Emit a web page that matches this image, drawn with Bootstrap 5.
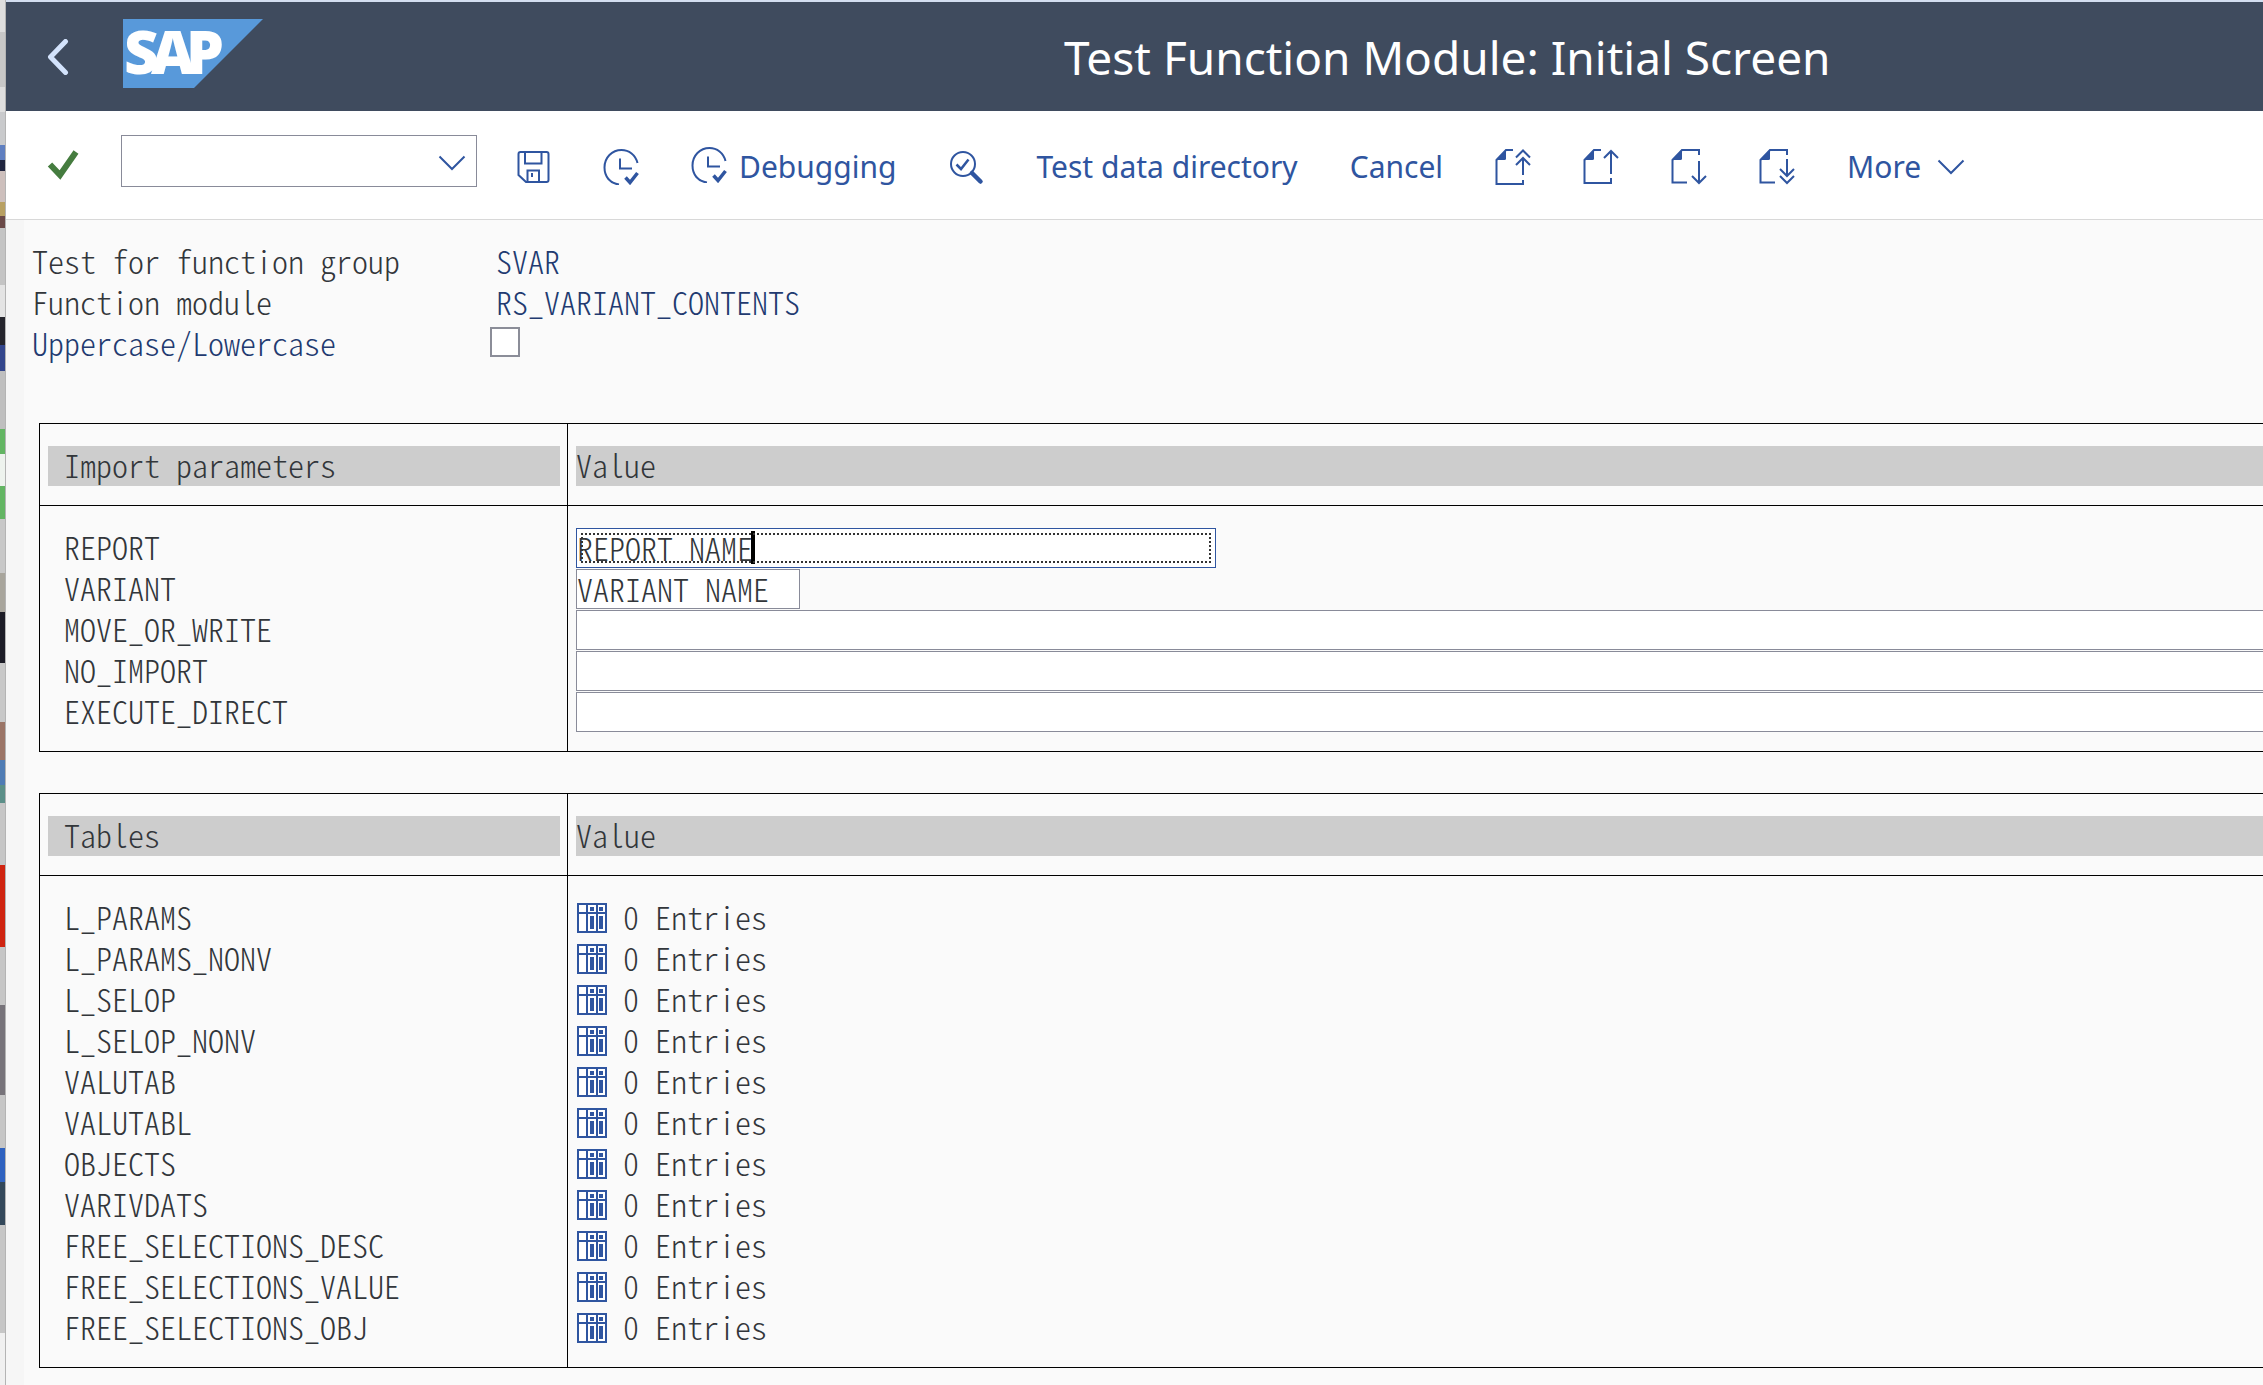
<!DOCTYPE html>
<html lang="en">
<head>
<meta charset="utf-8">
<meta name="viewport" content="width=device-width, initial-scale=1">
<title>Test Function Module: Initial Screen</title>
<link rel="stylesheet" href="https://cdn.jsdelivr.net/npm/bootstrap@5.3.0/dist/css/bootstrap.min.css">
<style>
:root{--ink:#32363a;--blue:#2f55a0;--navy:#223a70}
body{background:#fafafa;font-family:"Noto Sans","Open Sans",sans-serif;overflow:hidden}
.desktop-edge{width:6px;border-right:1px solid #b4b4b4;background:linear-gradient(#dedede 0 32px,#c8c8c8 32px 87px,#dedede 87px 112px,#c9cacc 112px 145px,#5f7fc0 145px 160px,#20253f 160px 171px,#cdbfbc 171px 202px,#b8a062 202px 216px,#6b4a48 216px 228px,#c4c4c4 228px 285px,#e4e4e4 285px 317px,#25252d 317px 345px,#33468c 345px 371px,#bfbfbf 371px 429px,#63b563 429px 418px,#63b563 418px 418px,#63b563 418px 418px,#63b563 418px 454px,#eef3ee 454px 486px,#63b563 486px 519px,#c8c8c8 519px 573px,#a8a59c 573px 612px,#1c1c26 612px 663px,#c8c8c8 663px 722px,#9b7567 722px 760px,#4f7cb4 760px 785px,#5b8f88 785px 803px,#c6c6c6 803px 865px,#cf2410 865px 947px,#c6c6c6 947px 1005px,#77737a 1005px 1095px,#c6c6c6 1095px 1148px,#2f62c0 1148px 1182px,#33485a 1182px 1225px,#c6c6c6 1225px 1333px,#f0f0f0 1333px)}
.title-bar{height:111px;background:#3f4b5e;border-top:2px solid #d3def0}
.back-btn{width:64px;margin-left:20px}
.brand-mark{margin-left:33px;margin-bottom:6px}
.screen-title{font-size:46px;line-height:60px;font-weight:400;color:#fff;margin-left:801px}
.tool-bar{height:109px;border-bottom:1px solid #d8d8d8;gap:52px;padding-left:24px}
.tool-bar .btn{--bs-btn-color:var(--blue);font-size:30px;line-height:40px;border:0;padding:0}
.tool-bar .txt-btn{padding-top:3px}
.cmd-group{margin-right:-14px;padding-bottom:8px}
.cmd-box{width:356px;height:52px;margin-left:42px}
.cmd-box select{width:100%;height:100%;border:1px solid #898b99;background:#fff;appearance:none;border-radius:0}
.cmd-box svg{position:absolute;right:11px;top:20px;pointer-events:none}
.work-area{border-left:18px solid #f6f6f6;padding:22px 0 17px 8px;font:300 32px/36px "Noto Sans CJK SC",monospace;font-feature-settings:"hwid";color:var(--ink)}
.info-grid{display:grid;grid-template-columns:464px 1fr;grid-auto-rows:41px;color:var(--navy);margin-bottom:58px}
.info-grid .ink{color:var(--ink)}
.case-box{appearance:none;width:30px;height:30px;border:2px solid #8b8d98;background:#fff;margin:3px 0 0 -6px}
.param-table{width:calc(100% - 7px);margin:0 0 41px 7px;border-collapse:separate;border-spacing:0;border:solid #000;border-width:1px 0 1px 1px;table-layout:fixed}
.param-table th{font-weight:300;padding:22px 0 19px 8px;border-bottom:1px solid #000}
.param-table th:first-child,.param-table td:first-child{width:528px;border-right:1px solid #000}
.param-table th:first-child{padding-right:7px}
.param-table th div{background:#cdcdcd;height:40px}
.param-table th:first-child div{padding-left:16px}
.param-table td{height:41px;padding:1px 0 0 8px;vertical-align:top}
.param-table td:first-child{padding-left:24px}
.param-table tbody tr:first-child td{height:62px;padding-top:22px}
.param-table tbody tr:last-child td{height:60px}
.param-table label{display:block}
.field{display:block;width:100%;height:40px;border:1px solid #898b99;border-right-width:0;background:#fff;padding:0 0 3px;color:inherit;font:inherit;border-radius:0;outline:0}
.w40{width:640px}.w14{width:224px}
.w14 .field{border-right-width:1px}
.w40 .field{border-color:var(--blue);border-right-width:1px}
.w40::after{content:"";position:absolute;inset:5px;border:2px dotted #333;pointer-events:none}
.caret{position:absolute;left:175px;top:3px;width:4px;height:33px;background:#000}
.entry-btn{border:0;background:none;padding:4px 0 0 1px;display:block;line-height:0}
</style>
<script src="https://cdn.jsdelivr.net/npm/bootstrap@5.3.0/dist/js/bootstrap.bundle.min.js"></script>
</head>
<body>
<svg class="d-none" xmlns="http://www.w3.org/2000/svg">
<symbol id="i-clock" viewBox="0 0 36 36"><g fill="none" stroke="currentColor" stroke-width="2"><path d="M16 35.500C7 34.500 1.500 27.500 1.500 18.500C1.500 8.500 9 1 18.500 1C26 1 32.500 6 34.500 14"/><path d="M17 9.500V19.500H29"/><path d="M22.500 28.500L27 33.500L34.500 24" stroke-width="3.500"/></g></symbol>
<symbol id="i-page" viewBox="0 0 36 36"><path d="M1 11L11 .500V9.500Q11 11 9.500 11Z" fill="currentColor"/></symbol>
<symbol id="i-grid" viewBox="0 0 30 30"><rect x="1" y="1" width="28" height="28" fill="#fff" stroke="#2f55a0" stroke-width="2"/><path d="M10 1V29M20 1V29M1 10H29" stroke="#2f55a0" stroke-width="2"/><path d="M13 4h4v4h-4zM22 4h4v4h-4zM13 13h4v13h-4zM22 13h4v13h-4z" fill="#2f55a0"/></symbol>
</svg>
<div class="d-flex min-vh-100">
<div class="desktop-edge flex-shrink-0"></div>
<div class="flex-grow-1 overflow-hidden">
<header class="title-bar d-flex align-items-center">
<button class="btn back-btn border-0 p-0 flex-shrink-0" aria-label="Back"><svg width="22" height="36" viewBox="0 0 22 36"><path d="M18.500 2.500L3.500 18L18.500 33.500" fill="none" stroke="#d3e3fc" stroke-width="5" stroke-linecap="round" stroke-linejoin="round"/></svg></button>
<svg class="brand-mark flex-shrink-0" width="140" height="69" viewBox="0 0 140 69" role="img" aria-label="SAP"><path d="M0 0H140L71 69H0Z" fill="#5899da"/><text x="1 28 63" y="55" font-family="Open Sans,Noto Sans,sans-serif" font-size="60" font-weight="800" fill="#fff">SAP</text></svg>
<h1 class="screen-title mb-0 text-nowrap">Test Function Module: Initial Screen</h1>
</header>
<nav class="tool-bar bg-white d-flex align-items-center" aria-label="Functions">
<div class="cmd-group d-flex align-items-center">
<button class="btn" aria-label="Continue"><svg width="49" height="32" viewBox="0 0 49 32"><path d="M20 16.500L30 27L46 4" fill="none" stroke="#457c3f" stroke-width="6"/></svg></button>
<div class="cmd-box position-relative"><select aria-label="Command"><option></option></select><svg width="28" height="16" viewBox="0 0 28 16"><path d="M1.500 1.500L14 14L26.500 1.500" fill="none" stroke="#2f55a0" stroke-width="2"/></svg></div>
</div>
<button class="btn" aria-label="Save"><svg width="36" height="36" viewBox="0 0 36 36" fill="none" stroke="currentColor" stroke-width="2"><path d="M5.500 3H31.500Q33.500 3 33.500 5V31Q33.500 33 31.500 33H11L3.500 26V5Q3.500 3 5.500 3Z"/><path d="M10 3V14.500H26.500V3M12.500 33V21.500H24V33M17 24V28"/></svg></button>
<button class="btn" aria-label="Execute"><svg width="36" height="36"><use href="#i-clock"/></svg></button>
<button class="btn d-flex align-items-center gap-2"><svg width="36" height="36"><use href="#i-clock"/></svg><span class="txt-btn ps-1">Debugging</span></button>
<button class="btn" aria-label="Check"><svg width="36" height="36" viewBox="0 0 36 36" fill="none" stroke="currentColor" stroke-width="2"><circle cx="15" cy="15" r="12"/><path d="M8.500 15.500L13 20L20.500 10.500" stroke-width="2.500"/><path d="M24 24L32.500 32.500" stroke-width="4.500" stroke-linecap="round"/></svg></button>
<button class="btn txt-btn">Test data directory</button>
<button class="btn txt-btn">Cancel</button>
<button class="btn" aria-label="First page"><svg width="36" height="36" viewBox="0 0 36 36"><use href="#i-page"/><path d="M18 1H11L1.500 11V35H28V31M28 26V9M21 16L28 9L35 16M21 8.500L28 1.500L35 8.500" fill="none" stroke="currentColor" stroke-width="2"/></svg></button>
<button class="btn" aria-label="Previous page"><svg width="36" height="36" viewBox="0 0 36 36"><use href="#i-page"/><path d="M18 1H11L1.500 11V34H28V29M28 25V2M21 9L28 2L35 9" fill="none" stroke="currentColor" stroke-width="2"/></svg></button>
<button class="btn" aria-label="Next page"><svg width="36" height="36" viewBox="0 0 36 36"><use href="#i-page"/><path d="M16 33.500H1.500V11L11 1H28V6M28 12V34M21 27L28 34L35 27" fill="none" stroke="currentColor" stroke-width="2"/></svg></button>
<button class="btn" aria-label="Last page"><svg width="36" height="36" viewBox="0 0 36 36"><use href="#i-page"/><path d="M16 33.500H1.500V11L11 1H28V6M28 10V27M21 20L28 27L35 20M21 27L28 34L35 27" fill="none" stroke="currentColor" stroke-width="2"/></svg></button>
<button class="btn txt-btn d-flex align-items-center gap-3">More <svg width="28" height="16" viewBox="0 0 28 16"><path d="M1.500 1.500L14 14L26.500 1.500" fill="none" stroke="currentColor" stroke-width="2"/></svg></button>
</nav>
<main class="work-area">
<section class="info-grid">
<span class="ink">Test for function group</span><span>SVAR</span>
<span class="ink">Function module</span><span>RS_VARIANT_CONTENTS</span>
<label for="case">Uppercase/Lowercase</label><div><input type="checkbox" id="case" class="case-box d-block"></div>
</section>
<table class="param-table">
<thead><tr><th><div>Import parameters</div></th><th><div>Value</div></th></tr></thead>
<tbody>
<tr><td><label for="f1">REPORT</label></td><td><div class="w40 position-relative"><input class="field" id="f1" value="REPORT NAME"><span class="caret"></span></div></td></tr>
<tr><td><label for="f2">VARIANT</label></td><td><div class="w14"><input class="field" id="f2" value="VARIANT NAME"></div></td></tr>
<tr><td><label for="f3">MOVE_OR_WRITE</label></td><td><input class="field" id="f3"></td></tr>
<tr><td><label for="f4">NO_IMPORT</label></td><td><input class="field" id="f4"></td></tr>
<tr><td><label for="f5">EXECUTE_DIRECT</label></td><td><input class="field" id="f5"></td></tr>
</tbody>
</table>
<table class="param-table mb-0">
<thead><tr><th><div>Tables</div></th><th><div>Value</div></th></tr></thead>
<tbody id="entries"></tbody>
</table>
</main>
</div>
</div>
<script>
document.getElementById('entries').innerHTML = ['L_PARAMS','L_PARAMS_NONV','L_SELOP','L_SELOP_NONV','VALUTAB','VALUTABL','OBJECTS','VARIVDATS','FREE_SELECTIONS_DESC','FREE_SELECTIONS_VALUE','FREE_SELECTIONS_OBJ']
  .map(n => `<tr><td>${n}</td><td><div class="d-flex gap-3"><button class="entry-btn" aria-label="Edit ${n}"><svg width="30" height="30"><use href="#i-grid"/></svg></button><span>0 Entries</span></div></td></tr>`).join('');
</script>
</body>
</html>
